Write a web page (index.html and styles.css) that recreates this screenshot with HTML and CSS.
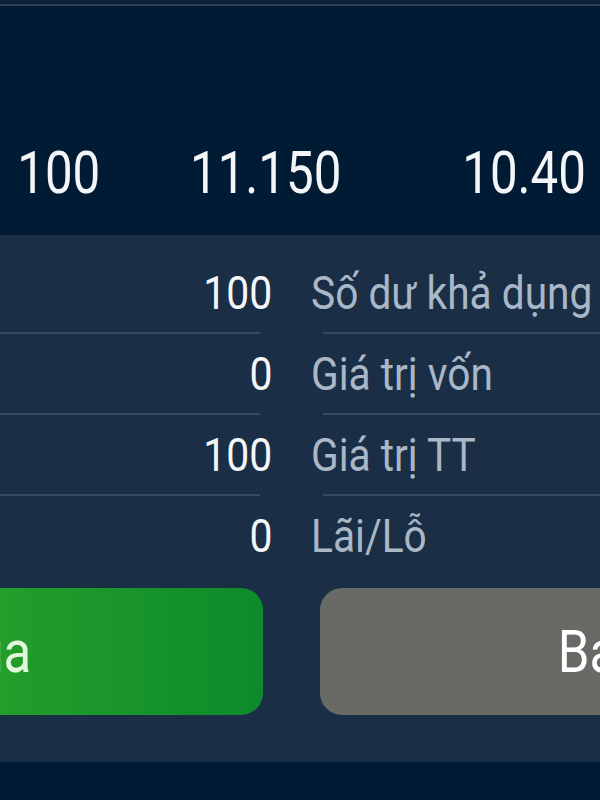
FILE: index.html
```html
<!DOCTYPE html>
<html lang="vi">
<head>
<meta charset="utf-8">
<link rel="stylesheet" href="styles.css">
</head>
<body>
<div class="screen">
  <section class="top">
    <div class="top-line"></div>
    <div class="prices">
      <div class="cell c1"><span class="num">100</span></div>
      <div class="cell c2"><span class="num">11.150</span></div>
      <div class="cell c3"><span class="num">10.40</span></div>
    </div>
  </section>
  <section class="panel">
    <div class="rows">
      <div class="row"><div class="val"><span>100</span></div><div class="lbl"><span>Số dư khả dụng</span></div></div>
      <div class="divider"><i class="dl"></i><i class="dr"></i></div>
      <div class="row"><div class="val"><span>0</span></div><div class="lbl"><span>Giá trị vốn</span></div></div>
      <div class="divider"><i class="dl"></i><i class="dr"></i></div>
      <div class="row"><div class="val"><span>100</span></div><div class="lbl"><span>Giá trị TT</span></div></div>
      <div class="divider"><i class="dl"></i><i class="dr"></i></div>
      <div class="row"><div class="val"><span>0</span></div><div class="lbl"><span>Lãi/Lỗ</span></div></div>
    </div>
    <div class="buttons">
      <div class="btn buy"><span>Mua</span></div>
      <div class="btn sell"><span>Bán</span></div>
    </div>
  </section>
  <section class="bottom"></section>
</div>
</body>
</html>
```

FILE: styles.css
```css
html, body {
  margin: 0;
  padding: 0;
  background: #021b34;
  overflow: hidden;
}
body {
  width: 600px;
  height: 800px;
  font-family: Roboto, "Noto Sans", sans-serif;
}
.screen {
  width: 600px;
  height: 800px;
  overflow: hidden;
  display: flex;
  flex-direction: column;
}
.top {
  height: 235px;
  background: #021b34;
  flex: none;
}
.top-line {
  height: 4px;
  background: #0c2138;
  border-bottom: 2px solid #2b3f57;
}
.prices {
  display: flex;
  margin-top: 137px;
  height: 59px;
}
.cell {
  display: flex;
  justify-content: center;
  flex: none;
}
.c1 { width: 118px; }
.c2 { width: 296px; }
.c3 { width: 152px; margin-left: auto; }
.num {
  display: inline-block;
  font-size: 59px;
  line-height: 59px;
  color: #f3f5f7;
  transform: scaleX(0.835);
  white-space: nowrap;
}
.panel {
  background: #1a2e46;
  height: 527px;
  flex: none;
  padding-top: 18px;
  box-sizing: border-box;
}
.row {
  display: flex;
  height: 79px;
  align-items: stretch;
}
.val {
  width: 272px;
  flex: none;
  display: flex;
  justify-content: flex-end;
}
.val span {
  display: inline-block;
  font-size: 47px;
  line-height: 79px;
  color: #f4f6f8;
  transform: scaleX(0.87);
  transform-origin: right center;
  white-space: nowrap;
}
.lbl {
  padding-left: 39px;
  display: flex;
}
.lbl span {
  display: inline-block;
  font-size: 47px;
  line-height: 79px;
  color: #a9b7c7;
  transform: scaleX(0.865);
  transform-origin: left center;
  white-space: nowrap;
}
.divider {
  display: flex;
  height: 2px;
}
.divider i {
  display: block;
  height: 2px;
  background: #304b65;
}
.dl { width: 260px; }
.dr { margin-left: 63px; flex: 1; }
.buttons {
  display: flex;
  gap: 57px;
  margin-top: 13px;
  margin-left: -301px;
}
.btn {
  width: 564px;
  height: 127px;
  flex: none;
  border-radius: 22px;
  display: flex;
  align-items: center;
  justify-content: center;
}
.btn span {
  display: inline-block;
  font-size: 60px;
  transform: scaleX(0.85);
  white-space: nowrap;
}
.buy {
  background: linear-gradient(90deg, #2aa42b 40%, #0d8a2b 100%);
}
.buy span { color: #e2f7dc; }
.sell { background: #686a66; }
.sell span { color: #ffffff; }
.bottom {
  flex: 1;
  background: #021b34;
}
```
